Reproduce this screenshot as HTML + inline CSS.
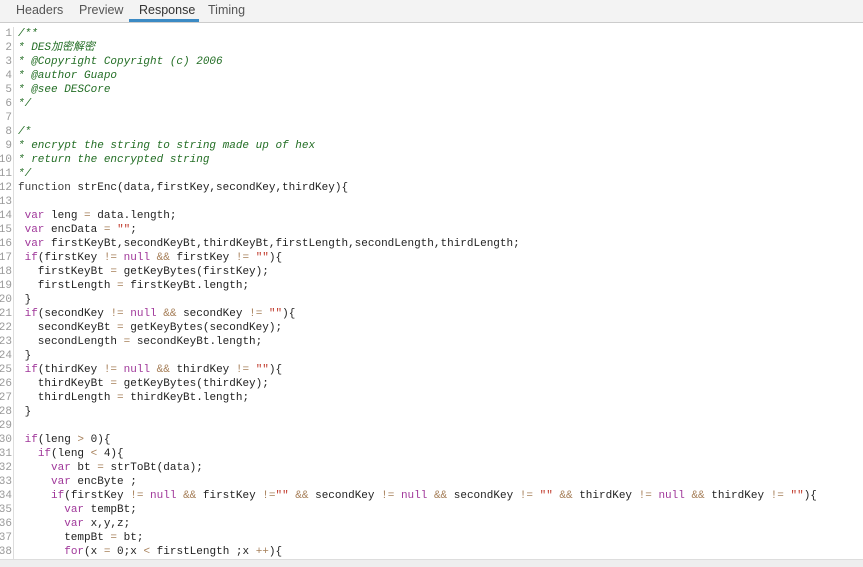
<!DOCTYPE html>
<html><head><meta charset="utf-8"><style>
html,body{margin:0;padding:0;width:863px;height:566px;overflow:hidden;background:#fff}
.tabs{height:22px;border-bottom:1px solid #ccc;background:#f3f3f3;font-family:"Liberation Sans",sans-serif;font-size:12.5px;color:#555;position:relative}
.tab{position:absolute;top:3px;}
.tab.on{color:#333}
.ul{position:absolute;left:129px;width:70px;top:19px;height:3px;background:#3b8ac4}
.code{position:absolute;top:27px;left:0;font-family:"Liberation Mono","Noto Sans CJK SC",monospace;font-size:11px;line-height:14px;color:#222}
.ln{position:absolute;left:0;width:12px;overflow:hidden;text-align:right;color:#999;white-space:pre;direction:rtl}
.g{position:absolute;left:13px;top:27px;width:1px;height:532px;background:#ddd}
.tx{position:absolute;left:18px;white-space:pre}
.c{color:#236e25;font-style:italic}
.k{color:#a0389a}
.f{color:#3a3a3a}
.s{color:#c0392b}
.o{color:#a67f59}
.bot{position:absolute;top:559px;left:0;width:863px;height:7px;background:#eee;border-top:1px solid #ddd}
</style></head><body>
<div class="tabs">
<span class="tab" style="left:16px">Headers</span>
<span class="tab" style="left:79px">Preview</span>
<span class="tab on" style="left:139px">Response</span>
<span class="tab" style="left:208px">Timing</span>
<div class="ul"></div>
</div>
<div class="g"></div>
<div class="code">
<div class="ln">1
2
3
4
5
6
7
8
9
10
11
12
13
14
15
16
17
18
19
20
21
22
23
24
25
26
27
28
29
30
31
32
33
34
35
36
37
38</div>
<div class="tx"><span class="c">/**
* DES加密解密
* @Copyright Copyright (c) 2006
* @author Guapo
* @see DESCore
*/</span>

<span class="c">/*
* encrypt the string to string made up of hex
* return the encrypted string
*/</span>
<span class="f">function</span> strEnc(data,firstKey,secondKey,thirdKey){

 <span class="k">var</span> leng <span class="o">=</span> data.length;
 <span class="k">var</span> encData <span class="o">=</span> <span class="s">""</span>;
 <span class="k">var</span> firstKeyBt,secondKeyBt,thirdKeyBt,firstLength,secondLength,thirdLength;
 <span class="k">if</span>(firstKey <span class="o">!=</span> <span class="k">null</span> <span class="o">&amp;&amp;</span> firstKey <span class="o">!=</span> <span class="s">""</span>){
   firstKeyBt <span class="o">=</span> getKeyBytes(firstKey);
   firstLength <span class="o">=</span> firstKeyBt.length;
 }
 <span class="k">if</span>(secondKey <span class="o">!=</span> <span class="k">null</span> <span class="o">&amp;&amp;</span> secondKey <span class="o">!=</span> <span class="s">""</span>){
   secondKeyBt <span class="o">=</span> getKeyBytes(secondKey);
   secondLength <span class="o">=</span> secondKeyBt.length;
 }
 <span class="k">if</span>(thirdKey <span class="o">!=</span> <span class="k">null</span> <span class="o">&amp;&amp;</span> thirdKey <span class="o">!=</span> <span class="s">""</span>){
   thirdKeyBt <span class="o">=</span> getKeyBytes(thirdKey);
   thirdLength <span class="o">=</span> thirdKeyBt.length;
 }

 <span class="k">if</span>(leng <span class="o">&gt;</span> 0){
   <span class="k">if</span>(leng <span class="o">&lt;</span> 4){
     <span class="k">var</span> bt <span class="o">=</span> strToBt(data);
     <span class="k">var</span> encByte ;
     <span class="k">if</span>(firstKey <span class="o">!=</span> <span class="k">null</span> <span class="o">&amp;&amp;</span> firstKey <span class="o">!=</span><span class="s">""</span> <span class="o">&amp;&amp;</span> secondKey <span class="o">!=</span> <span class="k">null</span> <span class="o">&amp;&amp;</span> secondKey <span class="o">!=</span> <span class="s">""</span> <span class="o">&amp;&amp;</span> thirdKey <span class="o">!=</span> <span class="k">null</span> <span class="o">&amp;&amp;</span> thirdKey <span class="o">!=</span> <span class="s">""</span>){
       <span class="k">var</span> tempBt;
       <span class="k">var</span> x,y,z;
       tempBt <span class="o">=</span> bt;
       <span class="k">for</span>(x <span class="o">=</span> 0;x <span class="o">&lt;</span> firstLength ;x <span class="o">++</span>){</div>
</div>
<div class="bot"></div>
</body></html>
